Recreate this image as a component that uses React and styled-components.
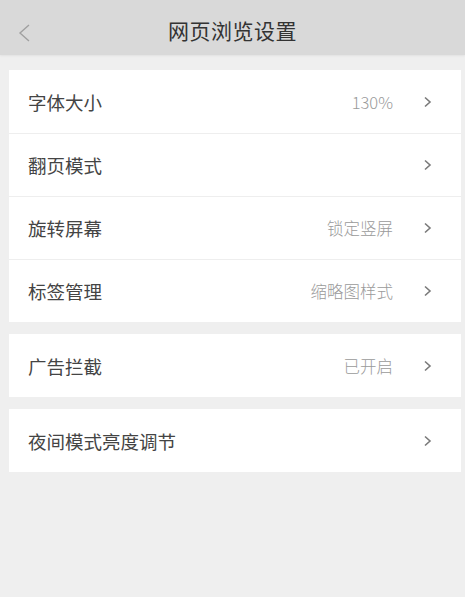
import React from 'react';
import styled, { createGlobalStyle } from 'styled-components';

const GlobalStyle = createGlobalStyle`
  html, body {
    margin: 0;
    padding: 0;
    background: #efefef;
    font-family: "Noto Sans CJK SC", "Noto Sans", sans-serif;
  }
`;

const Page = styled.div`
  width: 465px;
  height: 597px;
  background: #efefef;
  overflow: hidden;
`;

const Header = styled.div`
  height: 55px;
  background: #d9d9d9;
  display: flex;
  align-items: center;
  justify-content: center;
  position: relative;
  box-shadow: 0 1px 2px rgba(0, 0, 0, 0.06);
`;

const BackButton = styled.div`
  position: absolute;
  left: 16px;
  top: 22px;
  width: 18px;
  height: 22px;
  display: flex;
  align-items: center;
`;

const Title = styled.div`
  font-size: 21px;
  color: #333333;
  letter-spacing: 0.5px;
  margin-top: 4px;
`;

const Content = styled.div`
  padding: 15px 4px 0 9px;
  display: flex;
  flex-direction: column;
  gap: 12px;
`;

const Card = styled.div`
  background: #ffffff;
  display: flex;
  flex-direction: column;
`;

const Row = styled.div`
  box-sizing: border-box;
  height: 63px;
  display: flex;
  align-items: center;
  padding: 0 29px 0 19px;
  border-top: ${props => (props.first ? 'none' : '1px solid #eeeeee')};
`;

const Label = styled.div`
  flex: 1;
  font-size: 18.5px;
  color: #444444;
`;

const Value = styled.div`
  font-size: 16.5px;
  font-weight: 300;
  color: #9a9a9a;
  margin-right: 30px;
`;

const Chevron = () => (
  <svg width="9" height="12" viewBox="0 0 9 12">
    <path d="M2 1.5 L7 6 L2 10.5" fill="none" stroke="#7a7a7a" strokeWidth="1.6" strokeLinejoin="miter" />
  </svg>
);

const groups = [
  [
    { label: '字体大小', value: '130%' },
    { label: '翻页模式' },
    { label: '旋转屏幕', value: '锁定竖屏' },
    { label: '标签管理', value: '缩略图样式' },
  ],
  [{ label: '广告拦截', value: '已开启' }],
  [{ label: '夜间模式亮度调节' }],
];

const App = () => {
  return (
    <Page>
      <GlobalStyle />
      <Header>
        <BackButton>
          <svg width="16" height="20" viewBox="0 0 16 20">
            <path d="M13 2 L4 10 L13 18" fill="none" stroke="#a0a0a0" strokeWidth="1.4" />
          </svg>
        </BackButton>
        <Title>网页浏览设置</Title>
      </Header>
      <Content>
        {groups.map((rows, gi) => (
          <Card key={gi}>
            {rows.map((row, ri) => (
              <Row key={row.label} first={ri === 0}>
                <Label>{row.label}</Label>
                {row.value && <Value>{row.value}</Value>}
                <Chevron />
              </Row>
            ))}
          </Card>
        ))}
      </Content>
    </Page>
  );
};

export default App;
